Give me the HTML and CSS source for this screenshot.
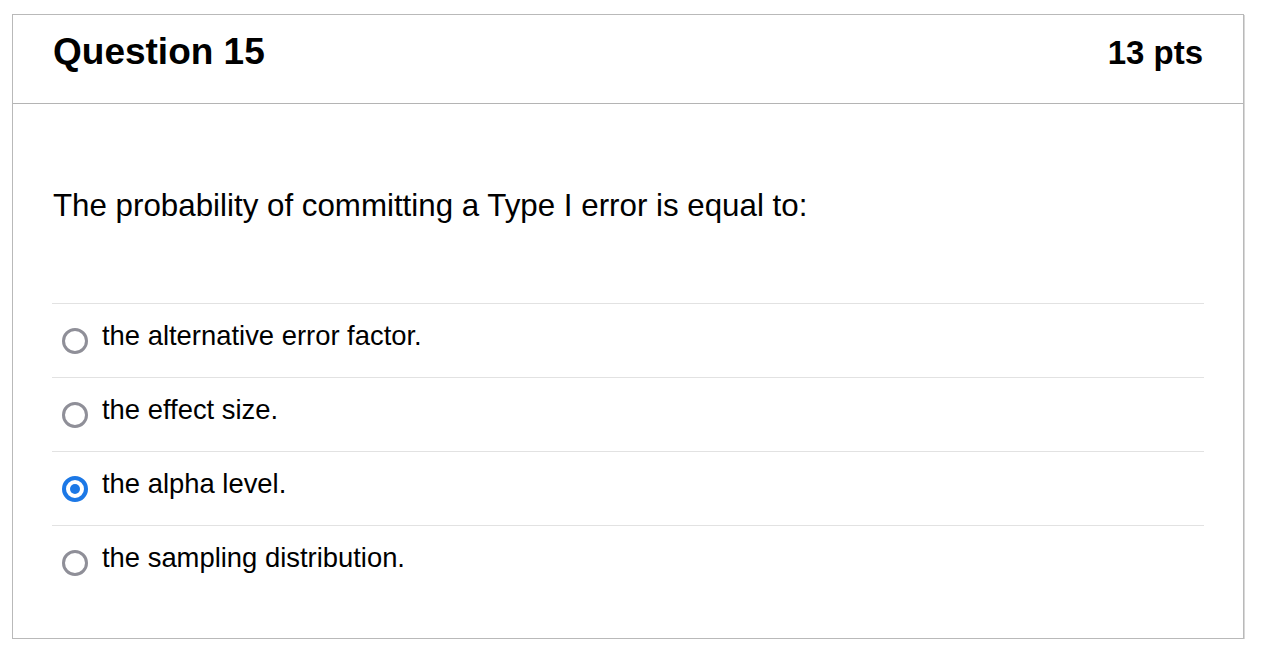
FILE: index.html
```html
<!DOCTYPE html>
<html>
<head>
<meta charset="utf-8">
<link rel="stylesheet" href="styles.css">
</head>
<body>
<div class="card">
  <div class="card-header">
    <h2 class="title">Question 15</h2>
    <div class="points">13 pts</div>
  </div>
  <div class="card-body">
    <p class="question">The probability of committing a Type I error is equal to:</p>
    <div class="answers">
      <label class="answer"><span class="radio"></span><span class="answer-text">the alternative error factor.</span></label>
      <label class="answer"><span class="radio"></span><span class="answer-text">the effect size.</span></label>
      <label class="answer"><span class="radio checked"></span><span class="answer-text">the alpha level.</span></label>
      <label class="answer"><span class="radio"></span><span class="answer-text">the sampling distribution.</span></label>
    </div>
  </div>
</div>
</body>
</html>
```

FILE: styles.css
```css
html, body {
  margin: 0;
  padding: 0;
  background: #ffffff;
}
body {
  font-family: "Liberation Sans", Arial, sans-serif;
  color: #000000;
  padding: 14px 28px 0 12px;
}
.card {
  border: 1px solid #b9b9b9;
  box-shadow: 1px 1px 0 #d8d8d8;
  height: 625px;
  box-sizing: border-box;
  display: flex;
  flex-direction: column;
}
.card-header {
  height: 89px;
  box-sizing: border-box;
  border-bottom: 1px solid #b4b4b4;
  display: flex;
  justify-content: space-between;
  align-items: baseline;
  padding: 17px 40px 0 40px;
}
.title {
  margin: 0;
  font-size: 37px;
  font-weight: bold;
  line-height: 40px;
}
.points {
  font-size: 33px;
  font-weight: bold;
  line-height: 40px;
}
.card-body {
  padding: 0 39px 0 39px;
}
.question {
  margin: 0;
  padding: 84px 0 79px 1px;
  font-size: 31.3px;
  line-height: 36px;
}
.answers {
  display: flex;
  flex-direction: column;
}
.answer {
  display: flex;
  align-items: flex-start;
  height: 74px;
  box-sizing: border-box;
  border-top: 1px solid #e2e2e2;
  padding-top: 17px;
}
.radio {
  width: 26px;
  height: 26px;
  box-sizing: border-box;
  border: 3.5px solid #8f8f98;
  border-radius: 50%;
  margin: 7px 14px 0 10px;
  flex: none;
  display: flex;
  align-items: center;
  justify-content: center;
}
.radio.checked {
  border: 4px solid #1c78e6;
}
.radio.checked::after {
  content: "";
  width: 10px;
  height: 10px;
  border-radius: 50%;
  background: #1c78e6;
}
.answer-text {
  font-size: 27.4px;
  line-height: 30px;
}
```
